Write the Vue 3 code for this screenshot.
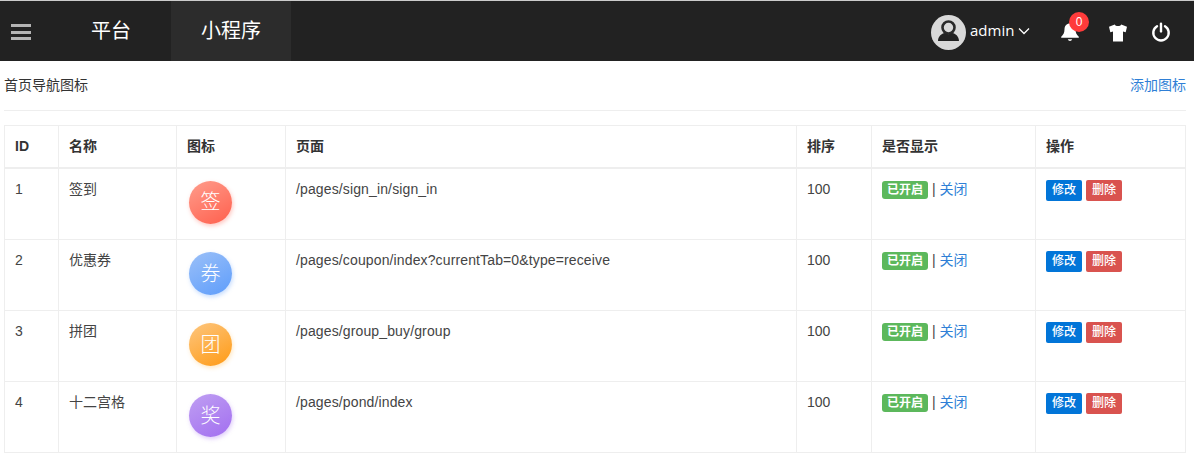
<script setup>
const rows = [
  { id: 1, name: '签到', glyph: '签', tone: 'red', page: '/pages/sign_in/sign_in' },
  { id: 2, name: '优惠券', glyph: '券', tone: 'blue', page: '/pages/coupon/index?currentTab=0&type=receive' },
  { id: 3, name: '拼团', glyph: '团', tone: 'orange', page: '/pages/group_buy/group' },
  { id: 4, name: '十二宫格', glyph: '奖', tone: 'purple', page: '/pages/pond/index' }
]
</script>

<template>
  <div class="page">
    <header class="topbar">
      <div class="left">
        <span class="burger"><i></i><i></i><i></i></span>
        <a class="tab">平台</a>
        <a class="tab active">小程序</a>
      </div>
      <div class="right">
        <span class="avatar">
          <svg viewBox="0 0 35 35" width="35" height="35">
            <circle cx="17.5" cy="17.5" r="17.5" fill="#d9d9d9" />
            <circle cx="17.5" cy="12.5" r="6" fill="none" stroke="#2a2a2a" stroke-width="2.6" />
            <path d="M7 26c0-5 4-7.500 6.500-8 2.500 1.500 5.500 1.500 8 0 2.500.5 6.500 3 6.500 8z" fill="#222" />
          </svg>
        </span>
        <span class="user">admin</span>
        <svg class="chev" viewBox="0 0 12 8" width="12" height="8"><path d="M1 1.500l5 5 5-5" fill="none" stroke="#fff" stroke-width="1.300" /></svg>
        <span class="bell">
          <svg viewBox="0 0 20 20" width="20" height="20">
            <path d="M10 1.500c-3.600 0-5.500 2.600-5.500 5.800 0 4-1.300 5.600-3.300 7.400v1.100h17.600v-1.100c-2-1.800-3.300-3.400-3.300-7.400 0-3.200-1.900-5.800-5.500-5.800z" fill="#fff" />
            <path d="M7.800 17.300a2.300 2.300 0 0 0 4.400 0z" fill="#fff" />
          </svg>
          <b class="badge">0</b>
        </span>
        <svg class="shirt" viewBox="0 0 18 18" width="18" height="18">
          <path d="M5.800.4L0 2.800l1.300 5.400 2.700-.7v10.100h10V7.500l2.700.7L18 2.800 12.200.4C11.500 2.600 6.500 2.600 5.800.4z" fill="#fff" />
        </svg>
        <svg class="power" viewBox="0 0 20 20" width="20" height="20">
          <path d="M6 4.200a7.700 7.700 0 1 0 8 0" fill="none" stroke="#fff" stroke-width="2.400" stroke-linecap="round" />
          <path d="M10 1.800v7.600" fill="none" stroke="#fff" stroke-width="2.400" stroke-linecap="round" />
        </svg>
      </div>
    </header>

    <main class="content">
      <div class="title-row">
        <span class="title">首页导航图标</span>
        <a class="add">添加图标</a>
      </div>
      <table class="grid">
        <colgroup>
          <col class="c1" /><col class="c2" /><col class="c3" /><col class="c4" />
          <col class="c5" /><col class="c6" /><col class="c7" />
        </colgroup>
        <thead>
          <tr>
            <th>ID</th><th>名称</th><th>图标</th><th>页面</th><th>排序</th><th>是否显示</th><th>操作</th>
          </tr>
        </thead>
        <tbody>
          <tr v-for="row in rows" :key="row.id">
            <td>{{ row.id }}</td>
            <td>{{ row.name }}</td>
            <td><span class="disc" :class="row.tone">{{ row.glyph }}</span></td>
            <td class="path">{{ row.page }}</td>
            <td>100</td>
            <td>
              <span class="label">已开启</span>
              <span class="sep"> | </span>
              <a class="link">关闭</a>
            </td>
            <td>
              <div class="actions">
                <span class="btn edit">修改</span>
                <span class="btn del">删除</span>
              </div>
            </td>
          </tr>
        </tbody>
      </table>
    </main>
  </div>
</template>

<style>
html, body { margin: 0; background: #fff; }
</style>

<style scoped>
.page {
  width: 1194px;
  height: 458px;
  overflow: hidden;
  font-family: "Liberation Sans", "Noto Sans CJK SC", sans-serif;
  font-size: 14px;
  line-height: 20px;
  color: #333;
}
.topbar {
  height: 60px;
  border-top: 1px solid #ccc;
  background: #222;
  display: flex;
  justify-content: space-between;
  align-items: stretch;
}
.left { display: flex; align-items: stretch; }
.burger {
  width: 51px;
  padding: 23px 0 0 11px;
  box-sizing: border-box;
  display: flex;
  flex-direction: column;
  gap: 3.5px;
}
.burger i { display: block; width: 20px; height: 3px; background: #b4b4b4; }
.tab {
  width: 120px;
  text-align: center;
  color: #fff;
  font-size: 20px;
  line-height: 61px;
}
.active { background: #2c2c2c; }
.right { display: flex; align-items: center; padding-right: 23px; }
.avatar { width: 35px; height: 35px; margin-right: 4px; margin-top: 2px; }
.user {
  width: 45px;
  color: #fff;
  font-family: "Open Sans", sans-serif;
  font-size: 15px;
  margin-right: 3px;
  margin-top: -3px;
}
.bell { position: relative; width: 20px; height: 20px; margin-left: 30px; margin-top: 1px; }
.badge {
  position: absolute;
  left: 9px;
  top: -10px;
  width: 20px;
  height: 20px;
  border-radius: 50%;
  background: #ff3b3b;
  color: #fff;
  font-size: 12px;
  font-weight: 400;
  line-height: 20px;
  text-align: center;
}
.shirt { margin-left: 29px; margin-top: 3px; }
.power { margin-left: 24px; margin-top: 1px; }
.content { padding: 0 8px 0 4px; }
.title-row {
  height: 47px;
  padding-bottom: 2px;
  border-bottom: 1px solid #eee;
  margin-bottom: 14px;
  display: flex;
  justify-content: space-between;
  align-items: center;
}
.add { color: #2f7fd6; }
.link { color: #2f7fd6; }
.grid {
  width: 1182px;
  table-layout: fixed;
  border-collapse: collapse;
  border: 1px solid #eee;
}
.c1 { width: 54px; }
.c2 { width: 118px; }
.c3 { width: 109px; }
.c4 { width: 511px; }
.c5 { width: 75px; }
.c6 { width: 164px; }
.c7 { width: 150px; }
th {
  height: 42px;
  padding: 0 10px 1px;
  box-sizing: border-box;
  border: 1px solid #eee;
  border-bottom: 2px solid #eee;
  text-align: left;
  font-size: 14px;
  font-weight: 700;
}
td {
  height: 71px;
  padding: 10px;
  box-sizing: border-box;
  border: 1px solid #eee;
  vertical-align: top;
  color: #444;
}
tbody tr:first-child td { height: 72px; }
.path { letter-spacing: .13px; }
.disc {
  display: flex;
  align-items: center;
  justify-content: center;
  width: 43px;
  height: 43px;
  margin: 2px 0 0 2px;
  border-radius: 50%;
  color: #fff;
  font-size: 20px;
  font-weight: 300;
}
.red { background: linear-gradient(150deg, #ff9d8c, #ff5f4d); box-shadow: 1px 2px 4px rgba(255, 95, 77, .35); }
.blue { background: linear-gradient(150deg, #9bc0f8, #5e9dfb); box-shadow: 1px 2px 4px rgba(94, 157, 251, .35); }
.orange { background: linear-gradient(150deg, #fdc67f, #ff9a14); box-shadow: 1px 2px 4px rgba(255, 180, 60, .3); }
.purple { background: linear-gradient(150deg, #bf9ff2, #a26ef0); box-shadow: 1px 2px 4px rgba(162, 110, 240, .35); }
.label {
  display: inline-block;
  width: 46px;
  height: 18px;
  border-radius: 3px;
  background: #5cb85c;
  color: #fff;
  font-size: 12px;
  font-weight: 700;
  line-height: 18px;
  text-align: center;
}
.actions { display: flex; gap: 4px; margin-top: 1px; }
.btn {
  width: 36px;
  height: 21px;
  border-radius: 2px;
  color: #fff;
  font-size: 12px;
  font-weight: 500;
  line-height: 20px;
  text-align: center;
}
.edit { background: #0275d8; }
.del { background: #d9534f; }
</style>
